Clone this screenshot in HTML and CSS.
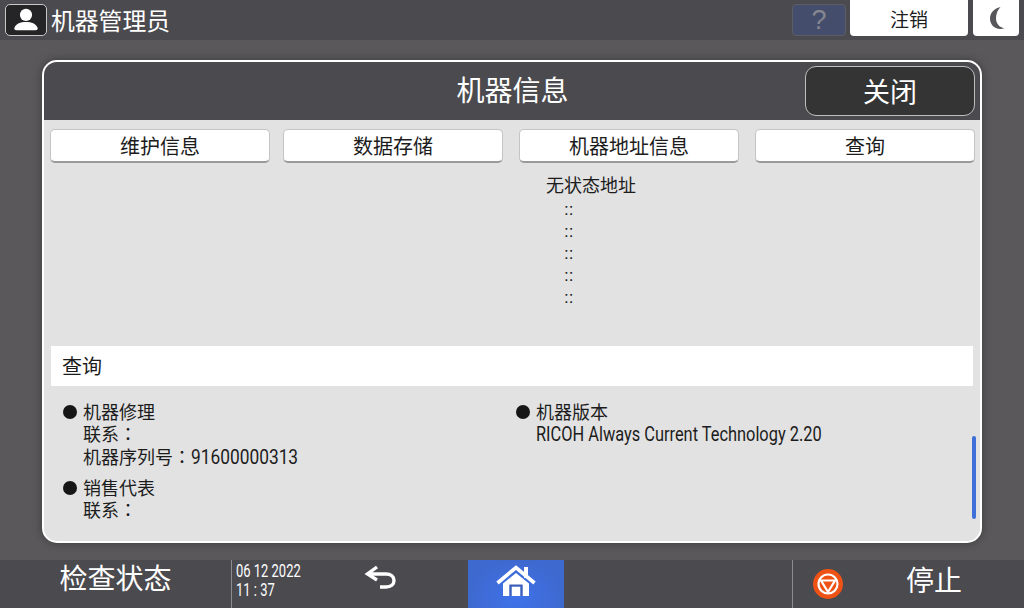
FILE: index.html
```html
<!DOCTYPE html>
<html lang="zh-CN">
<head>
<meta charset="utf-8">
<title>机器信息</title>
<link rel="stylesheet" href="styles.css">
</head>
<body>
<header class="topbar">
  <div class="user">
    <span class="user-icon">
      <svg viewBox="0 0 42 32" width="40" height="30"><circle cx="21" cy="10.5" r="6.5" fill="#fff"/><path d="M11 27c-2.500 0-3-1.500-2-3.500 1.500-3.500 6-5.500 12-5.500s10.500 2 12 5.500c1 2 .5 3.500-2 3.500z" fill="#fff"/></svg>
    </span>
    <span class="user-name">机器管理员</span>
  </div>
  <div class="top-actions">
    <span class="help">?</span>
    <button class="logout">注销</button>
    <button class="moon">
      <svg viewBox="0 0 24 30" width="24" height="30"><path d="M16.500 4C9.500 5.500 6 10.500 6 15.500S9.500 26 16.500 26c1.500 0 2.800-.3 3.800-.8C15.500 24.500 12 20.500 12 15.500 12 10.500 14 6.500 16.500 4z" fill="#57565a"/></svg>
    </button>
  </div>
</header>

<main class="stage">
  <section class="panel">
    <div class="panel-head">
      <h1 class="panel-title">机器信息</h1>
      <button class="close">关闭</button>
    </div>
    <div class="panel-body">
      <nav class="tabs">
        <button class="tab tab-first">维护信息</button>
        <button class="tab">数据存储</button>
        <button class="tab">机器地址信息</button>
        <button class="tab">查询</button>
      </nav>
      <div class="address">
        <div class="address-title">无状态地址</div>
        <div class="colon">::</div>
        <div class="colon">::</div>
        <div class="colon">::</div>
        <div class="colon">::</div>
        <div class="colon">::</div>
      </div>
      <div class="section-title">查询</div>
      <div class="info">
        <div class="info-col">
          <div class="item">
            <span class="dot"></span>
            <div class="lines">
              <div>机器修理</div>
              <div>联系<span class="fw-colon" lang="zh-TW">：</span></div>
              <div>机器序列号<span class="fw-colon" lang="zh-TW">：</span><span class="latin serial">91600000313</span></div>
            </div>
          </div>
          <div class="item">
            <span class="dot"></span>
            <div class="lines">
              <div>销售代表</div>
              <div>联系<span class="fw-colon" lang="zh-TW">：</span></div>
            </div>
          </div>
        </div>
        <div class="info-col">
          <div class="item">
            <span class="dot"></span>
            <div class="lines">
              <div>机器版本</div>
              <div class="latin version">RICOH Always Current Technology 2.20</div>
            </div>
          </div>
        </div>
      </div>
      <span class="scrollbar"></span>
    </div>
  </section>
</main>

<footer class="bottombar">
  <div class="status">检查状态</div>
  <div class="clock"><div class="clock-line">06 12 2022</div><div class="clock-line">11 : 37</div></div>
  <div class="back">
    <svg viewBox="0 0 36 30" width="36" height="30"><path d="M13 4 3.500 11 13 17" fill="none" stroke="#fff" stroke-width="3.400"/><path d="M5 11h17c5 0 8 2.500 8 6.500S27 24 22 24h-6" fill="none" stroke="#fff" stroke-width="3.400"/></svg>
  </div>
  <div class="home">
    <svg viewBox="0 0 42 36" width="42" height="36"><path d="M2.500 20 21 4.500 39.500 20" fill="none" stroke="#fff" stroke-width="3.600"/><path d="M29 4h4v11h-4z" fill="#fff"/><path fill-rule="evenodd" d="M8 20.500 21 10l13 10.500V33H8zM14.500 22v11h13V22z" fill="#fff"/><path d="M16.500 23.500h9V33h-9z" fill="#fff"/><path d="M14.500 21.500h13v2h-11V33h-2z" fill="#3d5fb5"/><path d="M25.500 23.500h2V33h-2z" fill="#3d5fb5"/></svg>
  </div>
  <div class="spacer"></div>
  <div class="stop">
    <svg class="stop-icon" viewBox="0 0 30 30" width="30" height="30"><circle cx="15" cy="15" r="15" fill="#ee5215"/><circle cx="15" cy="15" r="9.500" fill="none" stroke="#fff" stroke-width="2.200"/><path d="M8 11.500h14L15 23z" fill="none" stroke="#fff" stroke-width="2.200"/></svg>
    <span class="stop-label">停止</span>
  </div>
</footer>
</body>
</html>
```

FILE: styles.css
```css
* { box-sizing: border-box; }
html, body { margin: 0; padding: 0; }
body {
  width: 1024px;
  height: 608px;
  overflow: hidden;
  display: flex;
  flex-direction: column;
  background: #5a585b;
  font-family: "Noto Sans CJK SC", "Noto Sans", sans-serif;
  color: #1c1c1c;
}
button { font-family: inherit; padding: 0; cursor: pointer; }

.topbar {
  height: 40px;
  flex: none;
  background: #4b4a4f;
  display: flex;
  justify-content: space-between;
  padding: 0 5px 4px 5px;
}
.user { display: flex; align-items: center; gap: 4px; padding-top: 4px; }
.user-icon {
  width: 42px;
  height: 32px;
  background: #252527;
  border: 1px solid #c8c8c8;
  border-radius: 5px;
  display: flex;
  align-items: center;
  justify-content: center;
}
.user-name { color: #fff; font-size: 23.800px; line-height: 32px; }
.top-actions { display: flex; align-items: flex-start; }
.help {
  width: 54px;
  height: 32px;
  margin-top: 4px;
  background: #454d6c;
  border: 1px solid #5c5e66;
  border-radius: 4px;
  color: #85878f;
  font: 27px/30px "Liberation Sans", sans-serif;
  text-align: center;
}
.logout, .moon {
  height: 36px;
  background: #fff;
  border: 0;
  border-radius: 0 0 4px 4px;
  color: #1c1c1c;
}
.logout { width: 118px; margin-left: 4px; font-size: 19px; }
.moon { width: 46px; margin-left: 5px; display: flex; align-items: center; justify-content: center; }

.stage { flex: 1; padding: 20px 42px 17px; display: flex; min-height: 0; }
.panel {
  width: 940px;
  border: 2px solid #fff;
  border-radius: 15px;
  overflow: hidden;
  display: flex;
  flex-direction: column;
  box-shadow: 0 0 8px rgba(0, 0, 0, .35);
  background: #e2e2e2;
}
.panel-head {
  height: 58px;
  flex: none;
  background: #4b4a4f;
  position: relative;
  display: flex;
  align-items: center;
  justify-content: center;
}
.panel-title { margin: 0 0 4px 1px; color: #fff; font-size: 28px; font-weight: 400; line-height: 36px; }
.close {
  position: absolute;
  right: 5px;
  top: 4px;
  width: 170px;
  height: 50px;
  background: #343434;
  border: 1px solid #bdbdbd;
  border-radius: 11px;
  color: #fff;
  font-size: 27px;
  line-height: 46px;
}
.panel-body { flex: 1; position: relative; display: flex; flex-direction: column; }

.tabs { display: flex; gap: 16px; padding: 9px 0 0 6px; }
.tab {
  width: 220px;
  height: 34px;
  background: #fff;
  border: 1px solid #c4c4c4;
  border-bottom: 2px solid #9a9a9a;
  border-radius: 5px;
  color: #1c1c1c;
  font-size: 20px;
  line-height: 30px;
}
.tab-first { margin-right: -3px; }

.address { height: 183px; padding: 9px 0 0 502px; }
.address-title { font-size: 18px; line-height: 24px; margin-bottom: 3px; }
.colon {
  width: 50px;
  padding-left: 18px;
  font: 17px/22px "Liberation Sans", sans-serif;
  color: #222;
}

.section-title {
  margin-left: 7px;
  width: 922px;
  height: 40px;
  background: #fff;
  font-size: 20px;
  line-height: 39px;
  padding-left: 11px;
}
.info { display: flex; padding: 14px 0 0 19px; }
.info-col { width: 453px; display: flex; flex-direction: column; gap: 7px; }
.item { display: flex; gap: 6px; }
.dot {
  width: 14px;
  height: 14px;
  margin-top: 5px;
  background: #161616;
  border-radius: 50%;
  flex: none;
}
.lines {
  font-family: "Liberation Sans", "Noto Sans CJK SC", sans-serif;
  font-size: 18px;
  line-height: 22px;
  padding-top: 2px;
  white-space: nowrap;
}
.fw-colon { font-family: "Liberation Sans", "Noto Sans CJK TC", sans-serif; }
.latin {
  font-family: "Roboto", sans-serif;
  font-size: 21px;
  display: inline-block;
  transform-origin: left center;
}
.version { transform: scaleX(.78); margin-top: -1px; }
.serial { transform: scaleX(.825); }
.scrollbar {
  position: absolute;
  right: 4px;
  top: 316px;
  width: 4px;
  height: 83px;
  background: #3f6fd8;
  border-radius: 2px;
}

.bottombar {
  height: 48px;
  flex: none;
  background: #4b4a4f;
  display: flex;
  color: #fff;
}
.status {
  width: 232px;
  border-right: 1px solid #8c8c8c;
  font-size: 28px;
  line-height: 35px;
  text-align: center;
}
.clock { width: 100px; padding: 1px 0 0 4px; font-family: "Roboto", sans-serif; font-size: 18px; line-height: 19px; }
.clock-line { transform: scaleX(.72); transform-origin: left center; white-space: nowrap; }
.back { width: 98px; padding: 3px 0 0 32px; }
.home {
  width: 96px;
  margin-left: 38px;
  display: flex;
  justify-content: center;
  padding-top: 1px;
  background: radial-gradient(ellipse at 50% 80%, #3f72ea 0, #3e69cf 70%);
}
.home svg { margin-top: 2px; }
.spacer { flex: 1; }
.stop {
  width: 232px;
  border-left: 1px solid #8c8c8c;
  display: flex;
  align-items: center;
}
.stop-icon { margin-left: 20px; }
.stop-label { margin-left: 63px; margin-top: -11px; font-size: 28px; line-height: 36px; }
```
